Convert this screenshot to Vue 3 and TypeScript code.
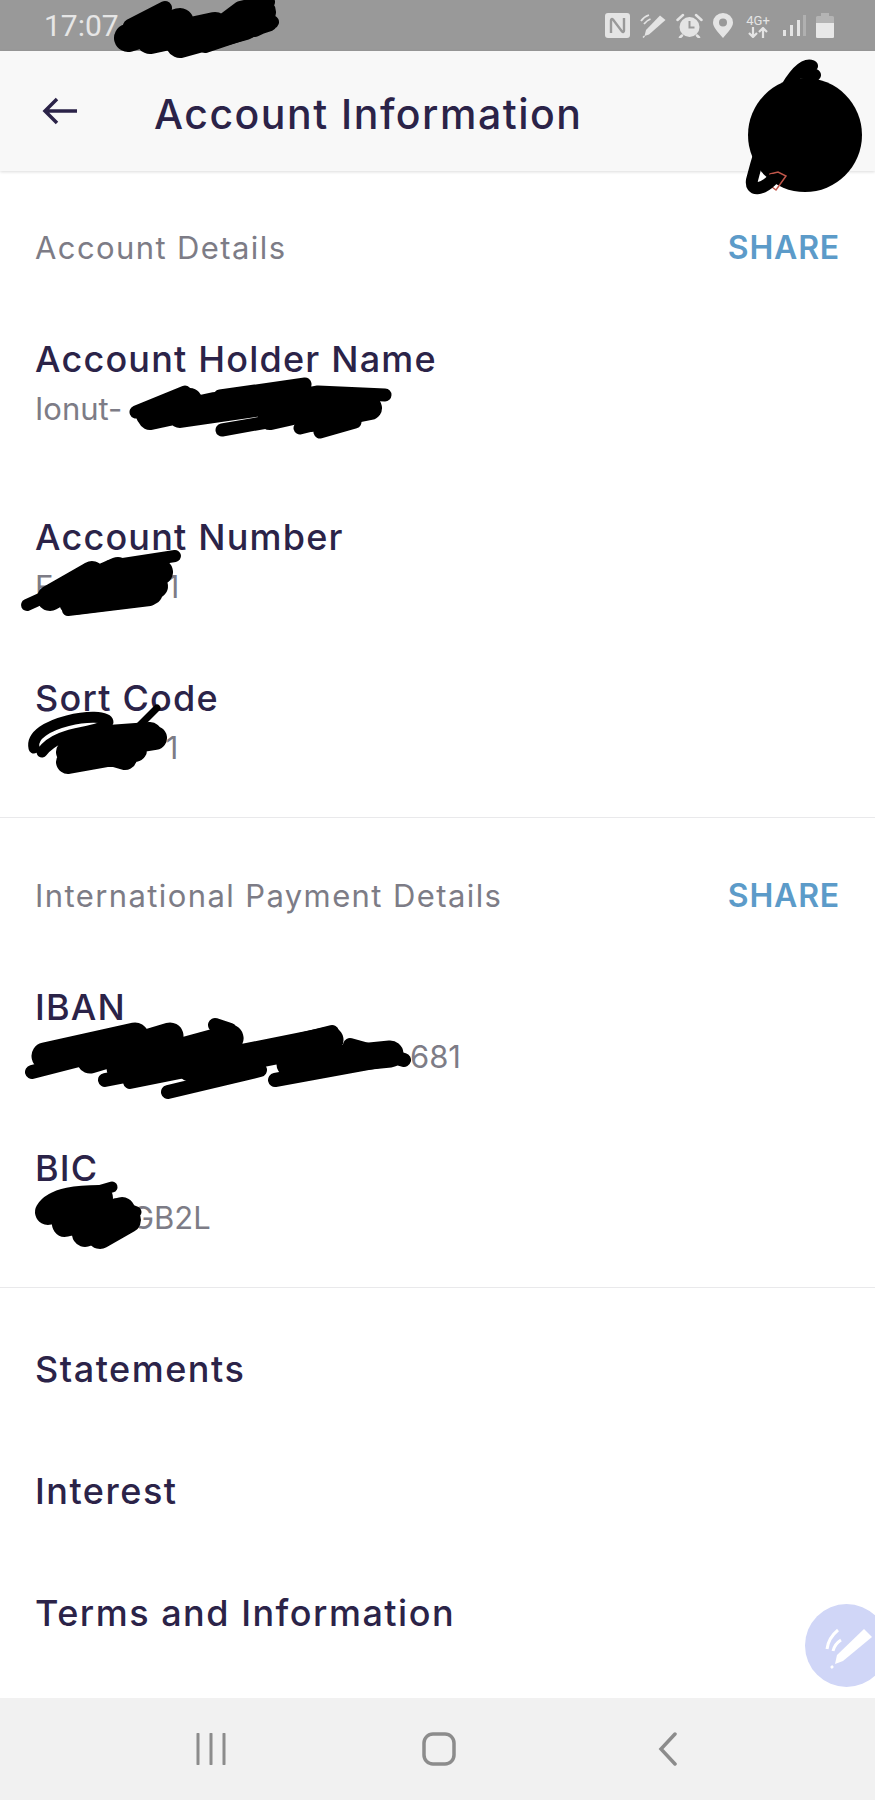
<script setup lang="ts">
const accountFields = [
  { label: 'Account Holder Name', value: 'Ionut-' },
  { label: 'Account Number', value: 'F' + ' '.repeat(13) + '1' },
  { label: 'Sort Code', value: ' '.repeat(15) + '1' },
]
const internationalFields = [
  { label: 'IBAN', value: ' '.repeat(43) + '681' },
  { label: 'BIC', value: ' '.repeat(11) + 'GB2L' },
]
const links = ['Statements', 'Interest', 'Terms and Information']

// marker scribbles over the private details
const scribbles = [
  { w: 28, d: 'M128 38 L180 22 L150 40 L215 26 L180 44 L245 26 L262 12' },
  { w: 14, d: 'M130 26 L165 8 M200 38 L240 8 L268 2 M205 46 L270 24 M255 30 L272 22' },
  { w: 12, d: 'M812 66 C796 60 770 110 752 180 C750 192 762 190 772 180 M800 72 L815 75' },
  { w: 24, d: 'M148 415 L190 400 L150 418 L215 404 L180 416 L275 402 M270 418 L350 400 L310 420 L370 408' },
  { w: 13, d: 'M136 412 L185 392 M220 396 L305 384 L245 402 L225 410 L318 392 L385 395 M222 430 L290 418 M300 428 L365 412 M320 432 L355 422' },
  { w: 26, d: 'M50 598 L92 574 L68 592 L118 570 L95 592 L160 572 M62 594 L155 586 M72 602 L150 592' },
  { w: 12, d: 'M27 605 L60 590 M68 610 L150 600 M110 566 L175 556' },
  { w: 11, d: 'M34 748 C28 722 105 710 108 722 C98 736 60 728 42 752' },
  { w: 24, d: 'M68 752 L155 738 M68 762 L135 750 M80 745 L125 758 M95 738 L150 734' },
  { w: 7, d: 'M135 730 L157 708' },
  { w: 27, d: 'M45 1056 L135 1036 L90 1060 L170 1036 L120 1068 L230 1038 L190 1068 L330 1040 L290 1064 L390 1054' },
  { w: 14, d: 'M32 1072 L110 1052 M105 1080 L270 1048 M130 1082 L230 1062 M168 1092 L260 1070 M275 1080 L395 1058 M215 1025 L230 1030 M300 1040 L332 1032 M350 1045 L404 1060' },
  { w: 26, d: 'M48 1212 C55 1200 80 1198 100 1198 L65 1224 L122 1210 L85 1234 L128 1220 L100 1236' },
  { w: 11, d: 'M74 1198 L112 1187 M115 1204 L136 1212' },
]
</script>

<template>
  <main class="phone">
    <div class="status-bar">
      <span class="clock">17:07</span>
      <div class="status-icons">
        <svg class="ic" width="25" height="25" viewBox="0 0 25 25">
          <rect width="25" height="25" rx="3" fill="#e4e4e4" />
          <path d="M6 20V7.500C6 6 7 5.500 8 6.500L17 18.500C18 19.500 19 19 19 17.500V5" fill="none" stroke="#999" stroke-width="2.400" />
        </svg>
        <svg class="ic" width="26" height="25" viewBox="0 0 26 25">
          <path d="M20 2.500L25.500 7L9 21.500L4.500 23L6 17Z" fill="#e4e4e4" />
          <path d="M3 24.500L4.500 23" stroke="#e4e4e4" stroke-width="1.500" />
          <path d="M1 8C3 5 6 3 9 2M4 11C6 8.500 8 7 10.500 6" fill="none" stroke="#e4e4e4" stroke-width="1.800" />
        </svg>
        <svg class="ic" width="27" height="25" viewBox="0 0 27 25">
          <circle cx="13.500" cy="14" r="10" fill="#e4e4e4" />
          <path d="M13.500 8V14.500H18.500" fill="none" stroke="#999" stroke-width="2" />
          <path d="M1.500 7L7 2M25.500 7L20 2M6 22.500L4 24.500M21 22.500L23 24.500" stroke="#e4e4e4" stroke-width="2.500" stroke-linecap="round" />
        </svg>
        <svg class="ic" width="20" height="25" viewBox="0 0 20 25">
          <path fill-rule="evenodd" d="M10 25C4 18 0 14 0 9.500A10 9.500 0 0 1 20 9.500C20 14 16 18 10 25ZM10 5.500A4 4 0 1 0 10 13.500A4 4 0 1 0 10 5.500Z" fill="#e4e4e4" />
        </svg>
        <div class="net">
          <span class="net-label">4G+</span>
          <svg width="20" height="11" viewBox="0 0 20 11">
            <path d="M5 0V10M1 6L5 10L9 6M15 11V1M11 5L15 1L19 5" fill="none" stroke="#e4e4e4" stroke-width="2.200" />
          </svg>
        </div>
        <svg class="ic" width="23" height="21" viewBox="0 0 23 21">
          <rect x="0" y="15" width="3" height="6" fill="#e4e4e4" />
          <rect x="7" y="10" width="3" height="11" fill="#e4e4e4" />
          <rect x="14" y="5" width="3" height="16" fill="#e4e4e4" />
          <rect x="20" y="0" width="3" height="21" fill="#b0b0b0" />
        </svg>
        <svg class="ic" width="18" height="25" viewBox="0 0 18 25">
          <path d="M5 0H13V3H16.500Q18 3 18 4.500V23.500Q18 25 16.500 25H1.500Q0 25 0 23.500V4.500Q0 3 1.500 3H5Z" fill="#b4b4b4" />
          <path d="M0 10H18V23.500Q18 25 16.500 25H1.500Q0 25 0 23.500Z" fill="#e8e8e8" />
        </svg>
      </div>
    </div>

    <header class="top-bar">
      <svg class="back" width="36" height="28" viewBox="0 0 36 28">
        <path d="M15 2L3 14L15 26M3 14H35" fill="none" stroke="#2b2348" stroke-width="3.500" />
      </svg>
      <h1 class="title">Account Information</h1>
    </header>

    <section class="details">
      <div class="section-head">
        <span class="section-name">Account Details</span>
        <span class="share">SHARE</span>
      </div>
      <div v-for="f in accountFields" :key="f.label" class="field">
        <div class="field-label">{{ f.label }}</div>
        <div class="field-value">{{ f.value }}</div>
      </div>
    </section>

    <section class="details international">
      <div class="section-head">
        <span class="section-name">International Payment Details</span>
        <span class="share">SHARE</span>
      </div>
      <div v-for="f in internationalFields" :key="f.label" class="field">
        <div class="field-label">{{ f.label }}</div>
        <div class="field-value">{{ f.value }}</div>
      </div>
    </section>

    <section class="links">
      <div v-for="l in links" :key="l" class="link-row">{{ l }}</div>
    </section>

    <nav class="nav-bar">
      <svg width="30" height="32" viewBox="0 0 30 32">
        <path d="M2 1V31M15 1V31M28 1V31" stroke="#8c8c8c" stroke-width="3" stroke-linecap="round" />
      </svg>
      <svg width="34" height="34" viewBox="0 0 34 34">
        <rect x="2" y="2" width="30" height="30" rx="9" fill="none" stroke="#8c8c8c" stroke-width="3.500" />
      </svg>
      <svg class="chevron" width="20" height="34" viewBox="0 0 20 34">
        <path d="M17 2L3 17L17 32" fill="none" stroke="#8c8c8c" stroke-width="3.500" stroke-linecap="round" />
      </svg>
    </nav>

    <div class="pen-bubble">
      <svg width="59" height="50" viewBox="0 0 59 50">
        <path d="M48 8L56 16L27 40L19 43L21 34Z" fill="#fff" />
        <path d="M15 47L17 45" stroke="#fff" stroke-width="2.500" />
        <path d="M11 28C12 20 16 14 22 9M17 30C18 26 20 22 25 19" fill="none" stroke="#fff" stroke-width="3" />
      </svg>
    </div>

    <!-- redaction marks -->
    <svg class="marks" width="875" height="1800" viewBox="0 0 875 1800">
      <circle cx="805" cy="135" r="57" fill="#000" />
      <path d="M770 174L778 172L786 176L776 190L768 184Z" fill="none" stroke="#c0564a" stroke-width="1.500" />
      <path v-for="(s, i) in scribbles" :key="i" :d="s.d" fill="none" stroke="#000" :stroke-width="s.w" stroke-linecap="round" stroke-linejoin="round" />
    </svg>
  </main>
</template>

<style scoped>
.phone {
  position: relative;
  width: 875px;
  height: 1800px;
  display: flex;
  flex-direction: column;
  background: #ffffff;
  font-family: Inter, "Open Sans", sans-serif;
  color: #2b2348;
  overflow: hidden;
}

.status-bar {
  height: 51px;
  flex: none;
  background: #999999;
  display: flex;
  align-items: center;
  justify-content: space-between;
  padding: 0 41px 0 44px;
}

.clock {
  font-family: Roboto, sans-serif;
  font-size: 30px;
  color: #e6e6e6;
}

.status-icons {
  display: flex;
  align-items: center;
  gap: 10px;
}

.net {
  display: flex;
  flex-direction: column;
  align-items: center;
  width: 26px;
  margin: 0 2px;
}

.net-label {
  font-family: Roboto, sans-serif;
  font-size: 13px;
  line-height: 13px;
  color: #e4e4e4;
}

.top-bar {
  height: 120px;
  flex: none;
  background: #f8f8f8;
  box-shadow: 0 1px 3px rgba(0, 0, 0, 0.14);
  display: flex;
  align-items: center;
  gap: 76px;
  padding: 0 0 0 42px;
  box-sizing: border-box;
  position: relative;
}

.title {
  margin: 6px 0 0;
  font-size: 41px;
  font-weight: 500;
  letter-spacing: 1.500px;
}

.details {
  display: flex;
  flex-direction: column;
  flex: none;
  padding: 0 35px;
  height: 647px;
  box-sizing: border-box;
  border-bottom: 1px solid #e9e9eb;
}

.international {
  height: 470px;
}

.section-head {
  display: flex;
  flex: none;
  justify-content: space-between;
  align-items: center;
  height: 46px;
  margin-top: 53px;
  margin-bottom: 64px;
}

.international .section-head {
  margin-top: 54px;
}

.section-name {
  font-size: 31px;
  letter-spacing: 1.400px;
  color: #7d7c86;
}

.share {
  font-size: 32px;
  font-weight: 600;
  letter-spacing: 0.800px;
  color: #5c9bc9;
}

.field {
  display: flex;
  flex: none;
  flex-direction: column;
  height: 100px;
  margin-bottom: 61px;
}

.field:nth-child(2):not(.international .field) {
  margin-bottom: 78px;
}

.field-label {
  font-size: 36px;
  line-height: 50px;
  font-weight: 500;
  letter-spacing: 1.200px;
}

.field-value {
  font-size: 31px;
  line-height: 50px;
  color: #7d7c86;
  white-space: pre;
}

.links {
  flex: 1;
  display: flex;
  flex-direction: column;
  padding: 56px 35px 0;
  gap: 72px;
}

.link-row {
  font-size: 36px;
  line-height: 50px;
  font-weight: 500;
  letter-spacing: 1.500px;
}

.nav-bar {
  height: 102px;
  flex: none;
  background: #f1f1f1;
  display: flex;
  align-items: center;
  gap: 196px;
  padding: 0 0 0 196px;
  box-sizing: border-box;
}

.chevron {
  margin-left: 6px;
}

.pen-bubble {
  position: absolute;
  left: 805px;
  top: 1604px;
  width: 83px;
  height: 83px;
  border-radius: 50%;
  background: #d0d6f7;
  display: flex;
  align-items: center;
  padding-left: 11px;
  box-sizing: border-box;
}

.marks {
  position: absolute;
  left: 0;
  top: 0;
  pointer-events: none;
}
</style>
